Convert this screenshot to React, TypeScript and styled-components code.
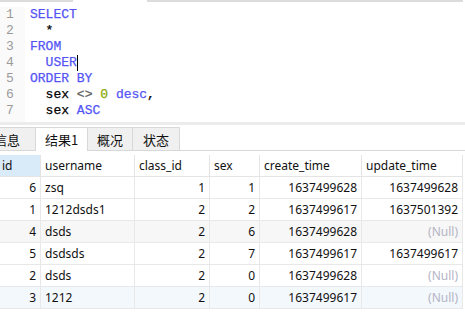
import React, { FC } from 'react';
import styled, { createGlobalStyle } from 'styled-components';

const GlobalStyle = createGlobalStyle`
	html, body {
		margin: 0;
		padding: 0;
		background: #ffffff;
	}
`;

type Tok = { t: string; c?: 'kw' | 'num' | 'op' | 'id' };

const lines: Tok[][] = [
	[{ t: 'SELECT', c: 'kw' }],
	[{ t: '  ' }, { t: '*', c: 'id' }],
	[{ t: 'FROM', c: 'kw' }],
	[{ t: '  ' }, { t: 'USER', c: 'kw' }],
	[{ t: 'ORDER BY', c: 'kw' }],
	[
		{ t: '  ' },
		{ t: 'sex', c: 'id' },
		{ t: ' ' },
		{ t: '<>', c: 'op' },
		{ t: ' ' },
		{ t: '0', c: 'num' },
		{ t: ' ' },
		{ t: 'desc', c: 'kw' },
		{ t: ',', c: 'id' },
	],
	[{ t: '  ' }, { t: 'sex', c: 'id' }, { t: ' ' }, { t: 'ASC', c: 'kw' }],
];

const tokColor: Record<string, string> = {
	kw: '#5454f4',
	num: '#86a800',
	op: '#606060',
	id: '#000000',
};

const columns = [
	{ name: 'id', width: 41, right: true },
	{ name: 'username', width: 94, right: false },
	{ name: 'class_id', width: 75, right: true },
	{ name: 'sex', width: 50, right: true },
	{ name: 'create_time', width: 102, right: true },
	{ name: 'update_time', width: 101, right: true },
];

const rows: (string | null)[][] = [
	['6', 'zsq', '1', '1', '1637499628', '1637499628'],
	['1', '1212dsds1', '2', '2', '1637499617', '1637501392'],
	['4', 'dsds', '2', '6', '1637499628', null],
	['5', 'dsdsds', '2', '7', '1637499617', '1637499617'],
	['2', 'dsds', '2', '0', '1637499628', null],
	['3', '1212', '2', '0', '1637499617', null],
];

const rowShade = ['#ffffff', '#ffffff', '#f7f7f7', '#ffffff', '#ffffff', '#f3f8fd'];

// the first tab is partly scrolled out of view on the left
const tabs = [
	{ label: '信息', width: 58 },
	{ label: '结果1', width: 52 },
	{ label: '概况', width: 45 },
	{ label: '状态', width: 47 },
];

const App: FC = () => {
	return (
		<Page>
			<GlobalStyle />
			<TopStrip>
				<StripPart $w={73} />
				<StripPart $w={74} $gap />
				<StripPart $w={316} />
			</TopStrip>
			<Editor>
				<Gutter>
					{lines.map((_, i) => (
						<LineNo key={i}>{i + 1}</LineNo>
					))}
				</Gutter>
				<Code>
					{lines.map((line, i) => (
						<CodeLine key={i}>
							{line.map((tok, j) => (
								<Tok key={j} $c={tok.c}>
									{tok.t}
								</Tok>
							))}
							{i === 3 && <Caret />}
						</CodeLine>
					))}
				</Code>
			</Editor>
			<Separator />
			<TabBar>
				{tabs.map((t, i) => (
					<Tab key={t.label} $active={i === 1} $w={t.width}>
						{t.label}
					</Tab>
				))}
			</TabBar>
			<Grid>
				{columns.map((col, i) => (
					<HeadCell key={col.name} $selected={i === 0}>
						{col.name}
					</HeadCell>
				))}
				{rows.map((row, r) =>
					row.map((v, c) => (
						<Cell key={`${r}-${c}`} $right={columns[c].right} $bg={rowShade[r]}>
							{v === null ? <Null>(Null)</Null> : v}
						</Cell>
					))
				)}
			</Grid>
		</Page>
	);
};

export default App;

const Page = styled.div`
	width: 465px;
	height: 314px;
	overflow: hidden;
	background: #ffffff;
`;

const TopStrip = styled.div`
	display: flex;
	height: 2px;
`;

const StripPart = styled.div<{ $w: number; $gap?: boolean }>`
	width: ${(p) => p.$w}px;
	height: 2px;
	background: ${(p) => (p.$gap ? '#ffffff' : '#dcdcdc')};
`;

const Editor = styled.div`
	display: flex;
	height: 120px;
	padding-top: 5px;
	box-sizing: border-box;
	font-family: 'Liberation Mono', 'Courier New', monospace;
	font-size: 13px;
	line-height: 16px;
`;

const Gutter = styled.div`
	width: 25px;
	padding-left: 6px;
	box-sizing: border-box;
	color: #9a9a9a;
	background: #fafafa;
`;

const LineNo = styled.div`
	height: 16px;
`;

const Code = styled.div`
	padding-left: 5px;
`;

const CodeLine = styled.div`
	height: 16px;
	white-space: pre;
	display: flex;
	align-items: center;
`;

const Tok = styled.span<{ $c?: string }>`
	color: ${(p) => (p.$c ? tokColor[p.$c] : '#000000')};
	white-space: pre;
	-webkit-text-stroke: 0.25px currentColor;
`;

const Caret = styled.span`
	display: inline-block;
	width: 1px;
	height: 16px;
	background: #000000;
`;

const Separator = styled.div`
	height: 3px;
	background: #ececec;
`;

const TabBar = styled.div`
	display: flex;
	align-items: flex-end;
	height: 25px;
	border-bottom: 1px solid #d8d8d8;
	font-family: 'Noto Sans CJK SC', 'Noto Sans', sans-serif;
	font-size: 13px;
	margin-left: -22px;
`;

const Tab = styled.div<{ $active: boolean; $w: number }>`
	flex: none;
	width: ${(p) => p.$w}px;
	height: ${(p) => (p.$active ? 24 : 23)}px;
	box-sizing: border-box;
	display: flex;
	align-items: center;
	justify-content: center;
	color: #111111;
	background: ${(p) => (p.$active ? '#ffffff' : '#f0f0f0')};
	border: 1px solid #d8d8d8;
	border-bottom: none;
	margin-bottom: ${(p) => (p.$active ? -1 : 0)}px;
	& + & {
		border-left: none;
	}
`;

const Grid = styled.div`
	display: grid;
	grid-template-columns: ${columns.map((c) => `${c.width}px`).join(' ')};
	grid-auto-rows: 22px;
	margin-top: 4px;
	font-family: 'Noto Sans', 'Noto Sans CJK SC', sans-serif;
	font-size: 12px;
	color: #111111;
`;

const HeadCell = styled.div<{ $selected: boolean }>`
	display: flex;
	align-items: center;
	padding: 0 4px;
	box-sizing: border-box;
	background: ${(p) => (p.$selected ? '#d9eaf8' : '#ffffff')};
	border-right: 1px solid #e4e4e4;
	border-bottom: 1px solid #e4e4e4;
	&:first-child {
		padding-left: 2px;
	}
`;

const Cell = styled.div<{ $right: boolean; $bg: string }>`
	display: flex;
	align-items: center;
	justify-content: ${(p) => (p.$right ? 'flex-end' : 'flex-start')};
	padding: 0 4px;
	box-sizing: border-box;
	background: ${(p) => p.$bg};
	border-right: 1px solid #e8e8e8;
	border-bottom: 1px solid #e8e8e8;
	white-space: nowrap;
`;

const Null = styled.span`
	color: #b4b4c4;
`;
